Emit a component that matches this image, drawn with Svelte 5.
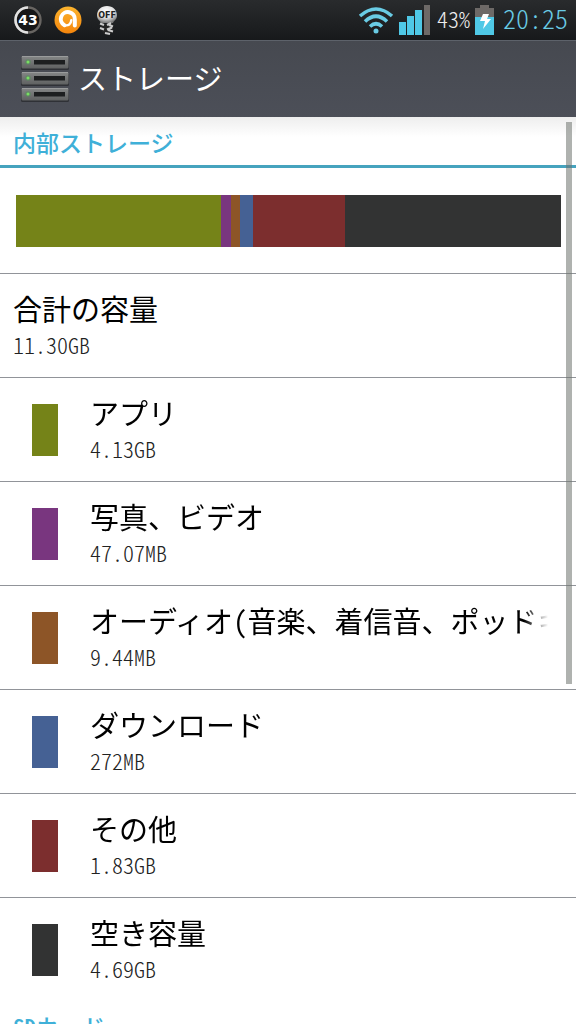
<script lang="ts">
	type Item = { name: string; size: string; color: string; share: number };

	const total = '11.30GB';

	const items: Item[] = [
		{ name: 'アプリ', size: '4.13GB', color: '#758318', share: 205 },
		{ name: '写真、ビデオ', size: '47.07MB', color: '#79367f', share: 10 },
		{ name: 'オーディオ(音楽、着信音、ポッドキャストなど)', size: '9.44MB', color: '#8d5527', share: 9 },
		{ name: 'ダウンロード', size: '272MB', color: '#456194', share: 13 },
		{ name: 'その他', size: '1.83GB', color: '#7c2e2e', share: 92 },
		{ name: '空き容量', size: '4.69GB', color: '#323333', share: 216 }
	];
</script>

<div class="screen">
	<div class="status-bar">
		<div class="status-group notices">
			<svg width="28" height="28" viewBox="0 0 28 28" role="img" aria-label="43">
				<circle cx="14" cy="14" r="12.5" fill="#171717" stroke="#686562" stroke-width="2.4" />
				<path d="M14 26.5A12.5 12.5 0 0 1 14 1.5" fill="none" stroke="#e2e2e2" stroke-width="2.6" />
				<text x="14" y="19" text-anchor="middle" class="badge-number">43</text>
			</svg>
			<svg width="28" height="28" viewBox="0 0 28 28" aria-hidden="true">
				<defs>
					<linearGradient id="orange" x1="0" y1="0" x2="0" y2="1">
						<stop offset="0" stop-color="#fbb42e" />
						<stop offset="1" stop-color="#f5850c" />
					</linearGradient>
				</defs>
				<circle cx="14" cy="14" r="13.5" fill="url(#orange)" />
				<path d="M10.500 19.200A7 7 0 1 1 20.800 13.500V19.500" fill="none" stroke="#fff" stroke-width="4" stroke-linecap="round" />
				<path d="M10.500 19.200c4 .8 6.500-1 6.800-5" fill="none" stroke="#fff" stroke-width="2.400" stroke-linecap="round" />
			</svg>
			<svg width="22" height="30" viewBox="0 0 22 30" role="img" aria-label="OFF">
				<defs>
					<radialGradient id="bulb" cx="0.45" cy="0.3" r="0.7">
						<stop offset="0" stop-color="#fff" />
						<stop offset="0.6" stop-color="#ddd" />
						<stop offset="1" stop-color="#777" />
					</radialGradient>
				</defs>
				<path d="M11 1C5 1 1 5 1 10.500c0 4 3 5 4 7.500h12c1-2.500 4-3.500 4-7.500C21 5 17 1 11 1z" fill="url(#bulb)" />
				<text x="11" y="13" text-anchor="middle" class="bulb-text">OFF</text>
				<path d="M5 19h12v6l-2 4H8l-3-4z" fill="#252525" />
				<path d="M4 18.500l4 1.500M13 20l4 1.500M4 23l4 1.500M12 25l5 1.500M9 28l5 1M15 18l-4 2M16 22.500l-5 2" stroke="#ccc" stroke-width="2" />
			</svg>
		</div>
		<div class="status-group system">
			<svg width="36" height="28" viewBox="0 0 36 28" aria-hidden="true">
				<g fill="none" stroke="#69cbe4" stroke-width="3.6">
					<path d="M2 10Q18-4 34 10" />
					<path d="M7 15.500Q18 5 29 15.500" />
					<path d="M12 20.500Q18 15 24 20.500" />
				</g>
				<circle cx="18" cy="25" r="2.500" fill="#69cbe4" />
			</svg>
			<svg width="31" height="30" viewBox="0 0 31 30" aria-hidden="true">
				<g fill="#4fc8e6">
					<rect x="0" y="17" width="7" height="13" />
					<rect x="8" y="11" width="7" height="19" />
					<rect x="16" y="5" width="7" height="25" />
				</g>
				<rect x="25" y="0" width="6" height="30" fill="#6d6967" />
			</svg>
			<span class="percent">43%</span>
			<svg width="19" height="30" viewBox="0 0 19 30" aria-hidden="true">
				<path d="M5 0h9v3h5v27H0V3h5z" fill="#6d6967" />
				<rect y="12" width="19" height="18" fill="#4fc8e6" />
				<path d="M8 9h6l-2 5h4L8 24l2-8H5z" fill="#fff" />
			</svg>
			<time class="clock">20:25</time>
		</div>
	</div>

	<header class="title-bar">
		<svg width="50" height="48" viewBox="0 0 50 48" aria-hidden="true">
			<defs>
				<linearGradient id="unit" x1="0" y1="0" x2="0" y2="1">
					<stop offset="0" stop-color="#858787" />
					<stop offset="1" stop-color="#5f6161" />
				</linearGradient>
			</defs>
			{#each [1, 17, 33] as y}
				<rect x="1" y={y + 1} width="48" height="13" rx="1.500" fill="#2f3136" />
				<rect x="1.500" {y} width="47" height="12.500" rx="1.500" fill="url(#unit)" />
				<path d="M2 {y + 0.5}h46" stroke="#9a9c9c" />
				<rect x="14" y={y + 4} width="31" height="4.500" fill="#1d1f20" />
				<circle cx="8" cy={y + 6} r="2.800" fill="#55915a" opacity="0.6" />
				<circle cx="8" cy={y + 6} r="1.500" fill="#79df62" />
			{/each}
		</svg>
		<h1>ストレージ</h1>
	</header>

	<main class="content">
		<h2>内部ストレージ</h2>
		<div class="usage">
			<div class="usage-bar">
				{#each items as item}
					<span style:flex-grow={item.share} style:background={item.color}></span>
				{/each}
			</div>
		</div>
		<ul>
			<li>
				<div class="label">
					<span class="name">合計の容量</span>
					<span class="size">{total}</span>
				</div>
			</li>
			{#each items as item}
				<li>
					<span class="swatch" style:background={item.color}></span>
					<div class="label">
						<span class="name faded">{item.name}</span>
						<span class="size">{item.size}</span>
					</div>
				</li>
			{/each}
		</ul>
		<h2>SDカード</h2>
		<div class="scrollbar"></div>
	</main>
</div>

<style>
	:global(body) {
		background: #fff;
	}

	.screen {
		display: flex;
		flex-direction: column;
		height: 100vh;
		overflow: hidden;
		font-family: 'Noto Sans CJK JP', sans-serif;
		font-feature-settings: 'hwid';
		color: #000;
	}

	.status-bar {
		display: flex;
		flex: none;
		align-items: center;
		justify-content: space-between;
		height: 40px;
		padding: 0 8px 0 14px;
		background: linear-gradient(#292b2d, #17191b);
	}

	.status-group {
		display: flex;
		align-items: center;
	}

	.notices {
		gap: 12px;
	}

	.notices svg:last-child {
		margin-left: 2px;
	}

	.system {
		gap: 5px;
	}

	.badge-number {
		font: bold 14px 'DejaVu Sans', sans-serif;
		fill: #fff;
	}

	.bulb-text {
		font: bold 8px 'DejaVu Sans', sans-serif;
		fill: #222;
	}

	.percent,
	.clock {
		padding-bottom: 4px;
		line-height: 36px;
		font-weight: 300;
	}

	.percent {
		margin-left: 2px;
		font-size: 22px;
		color: #eee;
	}

	.clock {
		margin-left: 4px;
		font-size: 26px;
		color: #69cbe4;
	}

	.title-bar {
		display: flex;
		flex: none;
		align-items: center;
		gap: 8px;
		height: 77px;
		box-sizing: border-box;
		padding: 0 20px;
		border-top: 1px solid #5d626a;
		background: linear-gradient(#464950, #4c4f58);
	}

	h1 {
		margin: 0;
		padding-bottom: 4px;
		font-size: 29px;
		line-height: 44px;
		font-weight: 400;
		color: #fff;
	}

	.content {
		position: relative;
		flex: 1;
		min-height: 0;
		overflow: hidden;
		background: linear-gradient(#eee, #fff 20px);
	}

	h2 {
		margin: 0;
		padding: 7px 13px 5px;
		border-bottom: 3px solid #46a3be;
		font-size: 23px;
		line-height: 36px;
		font-weight: 500;
		color: #3fb0d8;
	}

	.usage {
		padding: 27px 15px 26px 16px;
	}

	.usage-bar {
		display: flex;
		height: 52px;
	}

	ul {
		margin: 0;
		padding: 0;
		list-style: none;
	}

	li {
		display: flex;
		align-items: center;
		gap: 32px;
		padding: 0 28px 0 13px;
		border-top: 1px solid #919499;
	}

	.swatch {
		flex: none;
		width: 26px;
		height: 52px;
		margin-left: 19px;
	}

	.label {
		display: flex;
		flex: 1;
		flex-direction: column;
		min-width: 0;
		padding: 12px 0 19px;
	}

	.name {
		overflow: hidden;
		font-size: 29px;
		line-height: 44px;
		white-space: nowrap;
	}

	.faded {
		mask-image: linear-gradient(to left, transparent, #000 24px);
	}

	.size {
		font-size: 22px;
		line-height: 28px;
		font-weight: 300;
		color: #222;
	}

	.scrollbar {
		position: absolute;
		top: 5px;
		right: 4px;
		width: 6px;
		height: 62%;
		background: rgba(110, 114, 110, 0.55);
	}
</style>
